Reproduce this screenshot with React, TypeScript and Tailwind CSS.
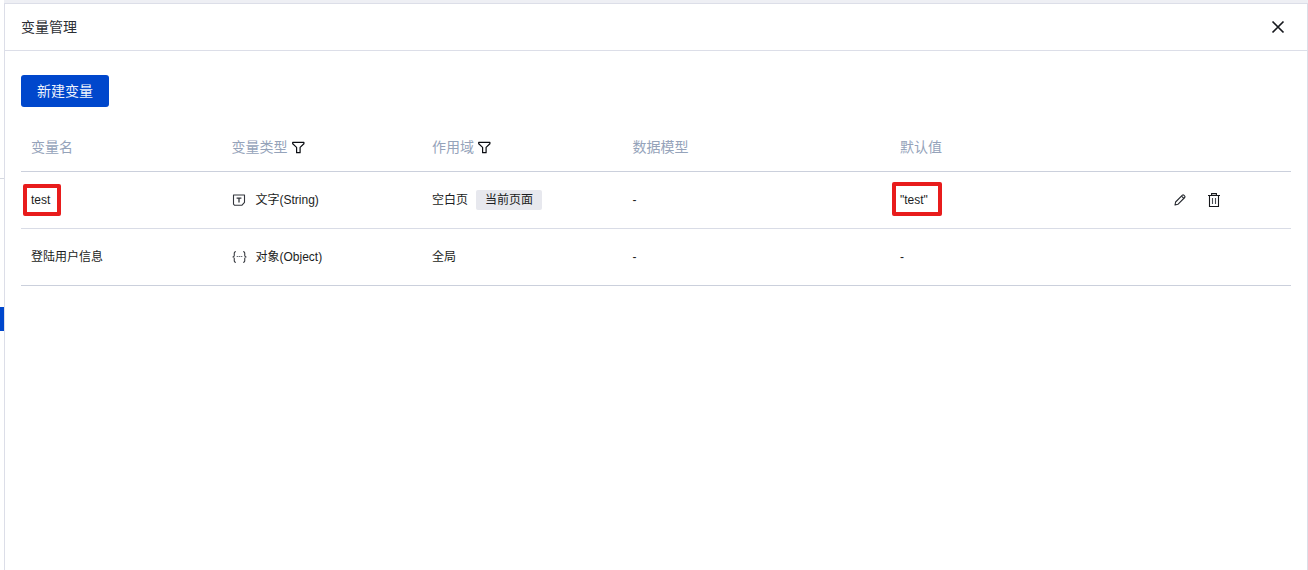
import type { ReactNode } from "react";

function FilterIcon() {
  return (
    <svg width="14" height="14" viewBox="0 0 14 14" fill="none" stroke="#0b0d12" strokeWidth="1.2" strokeLinejoin="round">
      <path d="M.7 2.3h11.2v1.5L8.1 7.4v5.3H4.6V7.4L.7 3.8z" />
    </svg>
  );
}

function StringIcon() {
  return (
    <svg width="14" height="14" viewBox="0 0 14 14" fill="none" stroke="#33363c" strokeLinejoin="round">
      <path d="M1.5 2h11v7.3L9.8 12.3H2.6L1.5 11.2z" strokeWidth="1.1" />
      <path d="M4.6 5.2h4.8M7 5.2v4.2" strokeWidth="1.3" />
    </svg>
  );
}

function ObjectIcon() {
  return (
    <svg width="16" height="14" viewBox="0 0 16 14" fill="none" stroke="#2a2d33" strokeWidth="1.1">
      <path d="M4.2 1.5h-.6Q2.4 1.5 2.4 2.8v2.6Q2.4 7 .6 7q1.8 0 1.8 1.6v2.6q0 1.3 1.2 1.3h.6" />
      <path d="M11.8 1.5h.6q1.2 0 1.2 1.3v2.6Q13.6 7 15.4 7q-1.8 0-1.8 1.6v2.6q0 1.3-1.2 1.3h-.6" />
      <path d="M5 6.5h1.6M7.2 6.5h1.6M9.4 6.5H11" stroke="#6a6e76" />
    </svg>
  );
}

function PencilIcon() {
  return (
    <svg width="14" height="14" viewBox="0 0 14 14" fill="none" stroke="#25282e" strokeWidth="1.1" strokeLinejoin="round">
      <path d="M2 12l.6-3L9.4 2.2q.7-.6 1.4 0l.9.9q.7.7 0 1.4L4.9 11.3z" />
      <path d="M8.5 3.1l2.3 2.3" />
    </svg>
  );
}

function TrashIcon() {
  return (
    <svg width="14" height="16" viewBox="0 0 14 16" fill="none" stroke="#15171b" strokeWidth="1.1">
      <path d="M1 3.5h12M4.6 3.3V1.6h4.8v1.7M2.5 3.5v11h9v-11" />
      <path d="M5.5 6v6M8.5 6v6" stroke="#4a4d53" />
    </svg>
  );
}

function CloseIcon() {
  return (
    <svg width="14" height="14" viewBox="0 0 14 14" fill="none" stroke="#17191e" strokeWidth="1.7">
      <path d="M1.5 1.5l11 11M12.5 1.5l-11 11" />
    </svg>
  );
}

type Variable = {
  name: ReactNode;
  icon: ReactNode;
  type: string;
  scope: string;
  tag?: string;
  model: string;
  value: ReactNode;
  editable: boolean;
};

const variables: Variable[] = [
  {
    name: (
      <span className="relative inline-block">
        test
        <span className="absolute -top-1.5 -right-[11px] -bottom-1.5 -left-2 rounded-xs border-4 border-[#e81c1c]" />
      </span>
    ),
    icon: <StringIcon />,
    type: "文字(String)",
    scope: "空白页",
    tag: "当前页面",
    model: "-",
    value: (
      <span className="relative inline-block">
        "test"
        <span className="absolute -top-2 -right-3.5 -bottom-1.5 -left-2 rounded-xs border-4 border-[#e81c1c]" />
      </span>
    ),
    editable: true,
  },
  {
    name: "登陆用户信息",
    icon: <ObjectIcon />,
    type: "对象(Object)",
    scope: "全局",
    model: "-",
    value: "-",
    editable: false,
  },
];

export default function App() {
  return (
    <div className="flex min-h-screen bg-white font-['Liberation_Sans','Noto_Sans_CJK_SC',sans-serif] text-[#1b1d22]">
      <div className="flex w-1 flex-col">
        <div className="h-[179px] border-b border-[#d5d8e0]" />
        <div className="mt-32 h-6 bg-[#0047cc]" />
      </div>
      <div className="flex flex-1 flex-col">
        <div className="h-[3px] bg-[#eeeff4]" />
        <main className="flex-1 border-x border-t border-[#dcdee8]">
          <header className="flex h-[47px] items-center justify-between border-b border-[#dcdee8] pr-5 pl-4">
            <h1 className="text-sm text-[#2b2e34]">变量管理</h1>
            <button type="button" aria-label="关闭" className="flex h-6 w-[18px] items-center justify-center">
              <CloseIcon />
            </button>
          </header>
          <div className="px-4 pt-6">
            <button type="button" className="mb-4 block h-8 rounded-[3px] bg-[#0047cc] px-4 text-sm text-[#eef3fc]">
              新建变量
            </button>
            <table className="w-full table-fixed border-collapse text-left">
              <thead>
                <tr className="h-12 border-b border-[#cbd0dc] text-sm text-[#95a3ba]">
                  <th className="w-3/19 px-2.5 font-normal">变量名</th>
                  <th className="w-3/19 px-2.5 font-normal">
                    <div className="flex items-center gap-1">
                      变量类型
                      <button type="button" aria-label="筛选变量类型">
                        <FilterIcon />
                      </button>
                    </div>
                  </th>
                  <th className="w-3/19 px-2.5 font-normal">
                    <div className="flex items-center gap-1">
                      作用域
                      <button type="button" aria-label="筛选作用域">
                        <FilterIcon />
                      </button>
                    </div>
                  </th>
                  <th className="w-4/19 px-2.5 font-normal">数据模型</th>
                  <th className="w-4/19 px-2.5 font-normal">默认值</th>
                  <td className="w-2/19" />
                </tr>
              </thead>
              <tbody>
                {variables.map((v) => (
                  <tr key={v.type} className="h-[57px] border-b border-[#d9dce6] text-xs leading-5 last:border-[#cbd0dc]">
                    <td className="px-2.5">{v.name}</td>
                    <td className="px-2.5">
                      <div className="flex items-center gap-[9px]">
                        <span className="flex w-[15px] justify-center">{v.icon}</span>
                        {v.type}
                      </div>
                    </td>
                    <td className="px-2.5">
                      <div className="flex items-center gap-2">
                        {v.scope}
                        {v.tag && <span className="rounded-xs bg-[#e7e8ee] px-[9px]">{v.tag}</span>}
                      </div>
                    </td>
                    <td className="px-2.5">{v.model}</td>
                    <td className="px-2.5">{v.value}</td>
                    <td className="px-4">
                      {v.editable && (
                        <div className="flex items-center gap-5">
                          <button type="button" aria-label="编辑">
                            <PencilIcon />
                          </button>
                          <button type="button" aria-label="删除">
                            <TrashIcon />
                          </button>
                        </div>
                      )}
                    </td>
                  </tr>
                ))}
              </tbody>
            </table>
          </div>
        </main>
      </div>
    </div>
  );
}
